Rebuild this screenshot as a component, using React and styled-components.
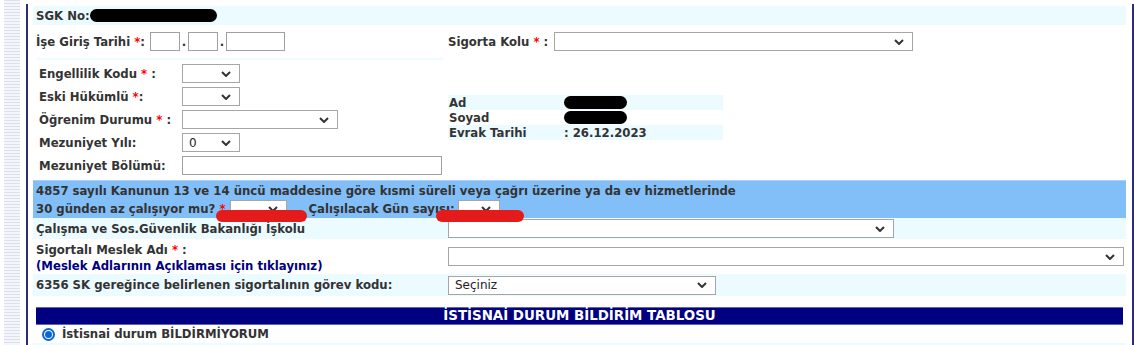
import React from "react";
import styled, { createGlobalStyle } from "styled-components";

const GlobalStyle = createGlobalStyle`
  body {
    margin: 0;
    background: #fff;
    font-family: "DejaVu Sans", Verdana, sans-serif;
    font-size: 11.7px;
    font-weight: bold;
    color: #333;
  }
`;

const Page = styled.div`
  display: flex;
  height: 345px;
  overflow: hidden;
  position: relative;
`;

const Stripe = styled.div`
  width: 16px;
  margin-left: 4px;
  background: repeating-linear-gradient(to bottom, #dcdfec 0 1px, #f5f6fa 1px 3px);
`;

const Frame = styled.div`
  margin-left: 6px;
  margin-top: 4px;
  width: 1093px;
  padding: 2px 6px 0 5px;
  border-left: 2px solid #2b2b80;
  border-right: 2px solid #2b2b80;
`;

const SgkRow = styled.div`
  height: 19px;
  display: flex;
  align-items: center;
  padding-left: 3px;
  background: #ecfbff;
`;

const Blob = styled.span`
  display: inline-block;
  width: ${(p) => p.$w}px;
  height: 13px;
  border-radius: 7px;
  background: #000;
`;

const Row = styled.div`
  display: grid;
  grid-template-columns: 413px 1fr;
  align-items: center;
  background: ${(p) => (p.$tint ? "#ecfbff" : "transparent")};
  height: ${(p) => p.$h}px;
`;

const Cell = styled.div`
  display: flex;
  align-items: center;
  padding-left: ${(p) => p.$pad ?? 3}px;
  white-space: pre;
`;

const Req = styled.span`
  color: #ff0000;
`;

const TextBox = styled.span`
  display: inline-block;
  box-sizing: border-box;
  width: ${(p) => p.$w}px;
  height: 19px;
  border: 1px solid #a0a0a0;
  background: #fff;
  margin-left: ${(p) => p.$ml ?? 0}px;
`;

const Dot = styled.span`
  width: 8px;
  text-align: center;
`;

const SelectBox = styled.span`
  display: inline-flex;
  align-items: center;
  justify-content: space-between;
  box-sizing: border-box;
  width: ${(p) => p.$w}px;
  height: ${(p) => p.$h ?? 19}px;
  padding: 0 8px 0 6px;
  border: 1px solid #a6a6a6;
  background: #fff;
  font-weight: normal;
  font-size: 12px;
  color: #222;
  margin-left: ${(p) => p.$ml ?? 0}px;
`;

const Divider = styled.div`
  width: 406px;
  height: 2px;
  margin-left: 4px;
  background: #ecfbff;
`;

const Block = styled.div`
  display: grid;
  grid-template-columns: 413px 1fr;
  height: 115px;
  margin-top: 2px;
`;

const FieldList = styled.div`
  display: flex;
  flex-direction: column;
`;

const Field = styled.div`
  display: grid;
  grid-template-columns: 143px auto;
  align-items: center;
  height: 23px;
  padding-left: 6px;
  white-space: pre;
`;

const InfoTable = styled.div`
  margin-top: 33px;
  width: 275px;
  margin-left: 2px;
`;

const InfoRow = styled.div`
  display: grid;
  grid-template-columns: 115px 1fr;
  align-items: center;
  height: 15px;
  padding-left: 1px;
  background: ${(p) => (p.$tint ? "#ecfbff" : "transparent")};
`;

const BlueBand = styled.div`
  margin-top: 3px;
  height: 37px;
  border-top: 1px solid #a8d0f8;
  background: #82bef7;
  padding-left: 3px;
  display: flex;
  flex-direction: column;
  justify-content: center;
  gap: 1px;
  white-space: pre;
`;

const BandLine = styled.div`
  display: flex;
  align-items: center;
  height: 17px;
`;

const LinkText = styled.div`
  color: #000080;
  margin-top: 2px;
`;

const TwoLine = styled.div`
  display: flex;
  flex-direction: column;
  padding-left: 3px;
  padding-top: 2px;
  white-space: pre;
`;

const TitleBar = styled.div`
  margin: 11px 3px 0;
  height: 16px;
  background: #000080;
  border-top: 1px solid #6262b0;
  border-bottom: 1px solid #6262b0;
  color: #fff;
  font-size: 13.4px;
  text-align: center;
  line-height: 16px;
`;

const RadioRow = styled.div`
  display: flex;
  align-items: center;
  height: 18px;
  padding-left: 9px;
  gap: 7px;
`;

const Radio = styled.span`
  width: 13px;
  height: 13px;
  box-sizing: border-box;
  border-radius: 50%;
  border: 2px solid #0a66d8;
  display: inline-flex;
  align-items: center;
  justify-content: center;
  &::after {
    content: "";
    width: 7px;
    height: 7px;
    border-radius: 50%;
    background: #0a66d8;
  }
`;

const TintStrip = styled.div`
  height: 10px;
  background: #ecfbff;
`;

const Scribble = styled.span`
  position: absolute;
  top: 210px;
  left: ${(p) => p.$x}px;
  width: ${(p) => p.$w}px;
  height: 12px;
  border-radius: 6px;
  background: #e31b1b;
`;

const Chevron = () => (
  <svg width="10" height="6" viewBox="0 0 10 6">
    <path d="M1 1 L5 5 L9 1" fill="none" stroke="#333" strokeWidth="2" />
  </svg>
);

const Select = ({ w, h, ml, children }) => (
  <SelectBox $w={w} $h={h} $ml={ml}>
    <span>{children}</span>
    <Chevron />
  </SelectBox>
);

export default function App() {
  return (
    <>
      <GlobalStyle />
      <Page>
        <Stripe />
        <Frame>
          <SgkRow>
            SGK No:<Blob $w={127} />
          </SgkRow>

          <Row $h={33}>
            <Cell>
              İşe Giriş Tarihi <Req>*</Req>:
              <TextBox $w={30} $ml={5} />
              <Dot>.</Dot>
              <TextBox $w={30} />
              <Dot>.</Dot>
              <TextBox $w={59} />
            </Cell>
            <Cell $pad={2}>
              Sigorta Kolu <Req>*</Req> : <Select w={359} ml={2} />
            </Cell>
          </Row>
          <Divider />

          <Block>
            <FieldList>
              <Field>
                <span>Engellilik Kodu <Req>*</Req> :</span>
                <Select w={58} />
              </Field>
              <Field>
                <span>Eski Hükümlü <Req>*</Req>:</span>
                <Select w={58} />
              </Field>
              <Field>
                <span>Öğrenim Durumu <Req>*</Req> :</span>
                <Select w={156} />
              </Field>
              <Field>
                <span>Mezuniyet Yılı:</span>
                <Select w={58}>0</Select>
              </Field>
              <Field>
                <span>Mezuniyet Bölümü:</span>
                <TextBox $w={260} />
              </Field>
            </FieldList>
            <InfoTable>
              <InfoRow $tint>
                <span>Ad</span>
                <Blob $w={63} />
              </InfoRow>
              <InfoRow>
                <span>Soyad</span>
                <Blob $w={63} />
              </InfoRow>
              <InfoRow $tint>
                <span>Evrak Tarihi</span>
                <span>: 26.12.2023</span>
              </InfoRow>
            </InfoTable>
          </Block>

          <BlueBand>
            <BandLine>
              4857 sayılı Kanunun 13 ve 14 üncü maddesine göre kısmi süreli veya çağrı üzerine ya da ev hizmetlerinde
            </BandLine>
            <BandLine>
              30 günden az çalışıyor mu? <Req>*</Req>
              <Select w={57} h={18} ml={4} />
              <span style={{ marginLeft: 22 }}>Çalışılacak Gün sayısı:</span>
              <Select w={42} h={18} ml={3} />
            </BandLine>
          </BlueBand>

          <Row $h={21} $tint>
            <Cell>Çalışma ve Sos.Güvenlik Bakanlığı İşkolu</Cell>
            <Cell $pad={2}>
              <Select w={446} />
            </Cell>
          </Row>

          <Row $h={35}>
            <TwoLine>
              <span>
                Sigortalı Meslek Adı <Req>*</Req> :
              </span>
              <LinkText>(Meslek Adlarının Açıklaması için tıklayınız)</LinkText>
            </TwoLine>
            <Cell $pad={2}>
              <Select w={676} />
            </Cell>
          </Row>

          <Row $h={22} $tint>
            <Cell>6356 SK gereğince belirlenen sigortalının görev kodu:</Cell>
            <Cell $pad={2}>
              <Select w={268}>Seçiniz</Select>
            </Cell>
          </Row>

          <TitleBar>İSTİSNAİ DURUM BİLDİRİM TABLOSU</TitleBar>
          <RadioRow>
            <Radio />
            İstisnai durum BİLDİRMİYORUM
          </RadioRow>
          <TintStrip />
        </Frame>
        <Scribble $x={216} $w={91} />
        <Scribble $x={436} $w={88} />
      </Page>
    </>
  );
}
